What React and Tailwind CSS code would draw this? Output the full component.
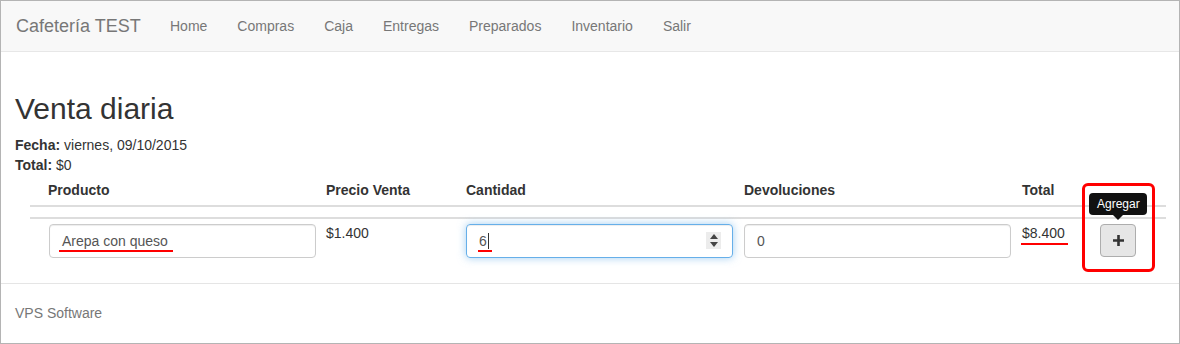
import React from "react";

const font = { fontFamily: '"Liberation Sans", Arial, sans-serif' };

export default function App() {
  const links = ["Home", "Compras", "Caja", "Entregas", "Preparados", "Inventario", "Salir"];
  return (
    <div
      className="w-[1180px] h-[344px] border border-[#b4b4b4] bg-white overflow-hidden box-border text-[#333]"
      style={font}
    >
      {/* navbar */}
      <nav className="h-[51px] bg-[#f8f8f8] border-b border-[#e7e7e7] rounded-tl-[3px] flex items-center">
        <span className="ml-[15px] w-[139px] text-[18px] leading-[20px] text-[#777]">Cafetería TEST</span>
        {links.map((l) => (
          <span key={l} className="px-[15px] text-[14px] leading-[20px] text-[#777]">
            {l}
          </span>
        ))}
      </nav>

      <div className="px-[14px]">
        <h1 className="mt-[40px] text-[30px] leading-[33px] font-normal">Venta diaria</h1>
        <div className="mt-[10px] text-[14px] leading-[20px]">
          <div>
            <b>Fecha:</b> viernes, 09/10/2015
          </div>
          <div>
            <b>Total:</b> $0
          </div>
        </div>

        {/* table */}
        <div className="ml-[15px] w-[1136px] text-[14px] leading-[20px]">
          <div className="mt-[5px] pb-[5px] border-b-2 border-[#dddddd] pl-[18px] grid grid-cols-[278px_140px_278px_278px_78px_1fr] font-bold">
            <div>Producto</div>
            <div>Precio Venta</div>
            <div>Cantidad</div>
            <div>Devoluciones</div>
            <div>Total</div>
            <div></div>
          </div>
          <div className="mt-[10px] border-t-2 border-[#dddddd] pt-[5px] pl-[18px] grid grid-cols-[278px_140px_278px_278px_78px_1fr] items-start">
            <div className="relative ml-[1px] w-[267px] h-[34px] border border-[#cccccc] rounded-[4px] px-[12px] flex items-center text-[#555] shadow-[inset_0_1px_1px_rgba(0,0,0,0.075)]">
              Arepa con queso
              <div className="absolute left-[9px] top-[25px] w-[114px] h-[2px] bg-[#ff0000]" />
            </div>
            <div className="-mt-[1px]">$1.400</div>
            <div className="relative w-[267px] h-[34px] border border-[#66afe9] rounded-[4px] px-[12px] flex items-center text-[#555] shadow-[inset_0_1px_1px_rgba(0,0,0,0.075),0_0_8px_rgba(102,175,233,0.6)]">
              <span>6</span>
              <span className="w-px h-[16px] bg-[#333] ml-[1px]" />
              <div className="absolute left-[11px] top-[25px] w-[14px] h-[2px] bg-[#ff0000]" />
              <div className="absolute left-[239px] top-[7px] w-[15px] h-[17px] bg-[#ececec] flex flex-col items-center justify-center gap-[3px]">
                <svg width="8" height="5" viewBox="0 0 8 5">
                  <path d="M4 0 L8 5 L0 5 Z" fill="#444" />
                </svg>
                <svg width="8" height="5" viewBox="0 0 8 5">
                  <path d="M0 0 L8 0 L4 5 Z" fill="#444" />
                </svg>
              </div>
            </div>
            <div className="w-[267px] h-[34px] border border-[#cccccc] rounded-[4px] px-[12px] flex items-center text-[#555] shadow-[inset_0_1px_1px_rgba(0,0,0,0.075)]">
              0
            </div>
            <div className="relative -mt-[1px]">
              $8.400
              <div className="absolute -left-[1px] top-[20px] w-[47px] h-[2px] bg-[#ff0000]" />
            </div>
            <div className="relative">
              <div className="w-[36px] h-[33px] bg-[#e6e6e6] border border-[#adadad] rounded-[4px] flex items-center justify-center">
                <svg width="11" height="11" viewBox="0 0 11 11">
                  <path d="M4.2 0 H6.8 V4.2 H11 V6.8 H6.8 V11 H4.2 V6.8 H0 V4.2 H4.2 Z" fill="#333" />
                </svg>
              </div>
              {/* tooltip */}
              <div className="absolute left-[-11px] top-[-31px] flex flex-col items-center">
                <div className="bg-[#111] text-white text-[12px] leading-[14px] px-[8px] py-[4px] rounded-[4px] w-[58px] text-center">
                  Agregar
                </div>
                <div className="w-0 h-0 border-l-[5px] border-r-[5px] border-t-[5px] border-l-transparent border-r-transparent border-t-[#111]" />
              </div>
              {/* red annotation */}
              <div className="absolute left-[-18px] top-[-41px] w-[73px] h-[89px] border-[3px] border-[#ff0000] rounded-[6px]" />
            </div>
          </div>
        </div>
      </div>

      {/* footer */}
      <div className="mt-[25px] border-t border-[#e5e5e5] px-[14px] pt-[19px] text-[14px] leading-[20px] text-[#777]">
        VPS Software
      </div>
    </div>
  );
}
